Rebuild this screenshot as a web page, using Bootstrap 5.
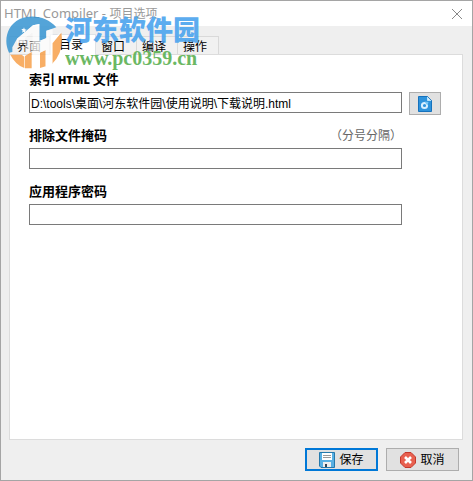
<!DOCTYPE html>
<html lang="zh-CN">
<head>
<meta charset="utf-8">
<meta name="viewport" content="width=device-width, initial-scale=1">
<title>HTML Compiler - 项目选项</title>
<link href="https://cdn.jsdelivr.net/npm/bootstrap@5.3.0/dist/css/bootstrap.min.css" rel="stylesheet">
<script src="https://cdn.jsdelivr.net/npm/bootstrap@5.3.0/dist/js/bootstrap.bundle.min.js" defer></script>
<style>
body{font:12px/16px "Liberation Sans","Noto Sans CJK SC",sans-serif;color:#000;background:#efefef;border:1px solid #a5a5a5}
.titlebar{height:25px;padding-left:3px;padding-right:9px;color:#999;line-height:24px}
.title-latin{font-family:"Noto Sans",sans-serif;font-size:13px}
.titlebar button{width:12px;height:12px;line-height:0}
.tab-strip{margin:8px 8px 0;height:20px}
.tab-strip .nav-link{height:18px;padding:0 0 0 5px;width:41px;line-height:20px;text-align:left;color:#000;background:#f1f1f1;border:1px solid #d9d9d9;border-bottom:0;border-left-width:0;border-radius:0;margin:0}
.tab-strip .nav-link.active{height:21px;width:46px;padding-left:8px;background:#fff;border-left-width:1px;margin-bottom:-1px;position:relative}
.tab-strip .nav-link.dim{color:#111;border-left-width:1px;padding-left:7px}
.panel{margin:0 9px 0 8px;background:#fff;border:1px solid #dcdcdc;padding:15px 21px 0 19px}
.field-row{gap:7px}
.field-group{margin-bottom:13px}
.head-row{height:20px;margin-bottom:2px}
.caption{font-size:13px;line-height:20px;font-weight:700}
.caption b{font-family:"Noto Sans",sans-serif;font-size:11px}
.hint{color:#666;line-height:20px}
.panel .form-control{height:21px;min-height:0;border:1px solid #7a7a7a;border-radius:0;padding:0 1px;font-size:12px;line-height:19px;color:#000}
.side{width:32px;flex:none}
.dlg-btn{height:23px;width:73px;padding:0;border:1px solid #adadad;border-radius:0;background:#e1e1e1;font-size:12px;line-height:16px;color:#000}
.dlg-btn.primary{border:2px solid #0078d7}
.dlg-btn.browse{width:32px;margin-bottom:-2px}
.actions{padding:8px 13px 9px}
.watermark{position:absolute;left:4px;top:15px;pointer-events:none;gap:3px}
.mark-name{font-size:27px;line-height:30px;font-weight:900;color:#4ba4ee;opacity:.9}
.mark-site{font-family:"Liberation Serif",serif;font-size:20px;line-height:24px;font-weight:700;color:#5cb153;opacity:.9}
</style>
</head>
<body class="min-vh-100 d-flex flex-column position-relative">
<header class="titlebar bg-white d-flex justify-content-between align-items-center">
<span><span class="title-latin">HTML Compiler - </span>项目选项</span>
<button type="button" class="border-0 bg-transparent p-0" aria-label="关闭"><svg width="12" height="12" viewBox="0 0 12 12"><path d="M1 1l10 10M11 1L1 11" stroke="#888" fill="none"/></svg></button>
</header>
<nav class="nav nav-tabs tab-strip border-0 align-items-end flex-nowrap">
<button type="button" class="nav-link dim">界面</button><button type="button" class="nav-link active">目录</button><button type="button" class="nav-link">窗口</button><button type="button" class="nav-link">编译</button><button type="button" class="nav-link">操作</button>
</nav>
<main class="panel flex-grow-1">
<div class="field-group">
<div class="head-row"><label class="caption" for="index">索引<b> HTML </b>文件</label></div>
<div class="d-flex field-row align-items-start"><input id="index" class="form-control" value="D:\tools\桌面\河东软件园\使用说明\下载说明.html">
<button type="button" class="btn dlg-btn browse side d-flex align-items-center justify-content-center" aria-label="浏览"><svg width="14" height="16" viewBox="0 0 14 16"><path d="M.5.5h9l4 4v11H.5z" fill="#2e93dc" stroke="#1672bd"/><path d="M9.500 1v3.500H13" fill="#d9f1ff" stroke="#b9e2fa"/><circle cx="6.500" cy="9.500" r="2.600" fill="none" stroke="#d7efff" stroke-width="2"/><path d="M6.500 5.500l4 .5-1 3.500z" fill="#76c5f4"/></svg></button></div>
</div>
<div class="field-group">
<div class="d-flex field-row"><div class="head-row flex-grow-1 d-flex justify-content-between"><label class="caption" for="mask">排除文件掩码</label><span class="hint">（分号分隔）</span></div><div class="side"></div></div>
<div class="d-flex field-row"><input id="mask" class="form-control"><div class="side"></div></div>
</div>
<div class="field-group">
<div class="head-row"><label class="caption" for="pass">应用程序密码</label></div>
<div class="d-flex field-row"><input id="pass" class="form-control"><div class="side"></div></div>
</div>
</main>
<footer class="actions d-flex justify-content-end gap-2">
<button type="button" class="btn dlg-btn primary d-flex align-items-center justify-content-center gap-1"><svg width="16" height="16" viewBox="0 0 16 16"><path d="M.5.5h15v15H2L.5 14z" fill="#58b0e3" stroke="#2579ac"/><path d="M3 1h10v7H3z" fill="#fff"/><path d="M4 3.500h8M4 5.500h8" stroke="#999"/><path d="M4 10h8v5H4z" fill="#eee"/><path d="M6 12h2v3H6z" fill="#345"/></svg>保存</button>
<button type="button" class="btn dlg-btn d-flex align-items-center justify-content-center gap-1"><svg width="16" height="16" viewBox="0 0 16 16"><path d="M5 .5h6L15.500 5v6L11 15.500H5L.5 11V5z" fill="#e8604f" stroke="#c4392c"/><path d="M5 5l6 6M11 5l-6 6" stroke="#fff" stroke-width="2.600"/></svg>取消</button>
</footer>
<div class="watermark d-flex">
<svg width="57" height="54" viewBox="12 30 171 162" opacity=".85">
<path d="M24 140C6 103 19 58 55 40C91 23 139 32 166 64L136 74V96L115 105V54L96 58L48 98L34 124V138Z" fill="#3795d2"/>
<path d="M28 146H62L70 152V186Q43 176 28 146ZM72 150L92 138V187H72ZM117 186V140L134 132V181ZM153 174V112L181 80Q190 139 153 174Z" fill="#f7a14b"/>
<path d="M48 98L96 58L115 54V105L136 97V74L155 69V96L181 78L155 112V174L134 181V132L117 140V187H94V80L72 97V112H48Z" fill="#fff" fill-opacity=".85"/>
<path d="M72 97L94 80V136L72 145Z" fill="#fff" fill-opacity=".5"/>
<path d="M69 64l2 6 6 1-5 4 1 6-5-4-5 3 2-6-4-5h6z" fill="#fff"/>
</svg>
<div><div class="mark-name">河东软件园</div><div class="mark-site">www.pc0359.cn</div></div>
</div>
</body>
</html>
